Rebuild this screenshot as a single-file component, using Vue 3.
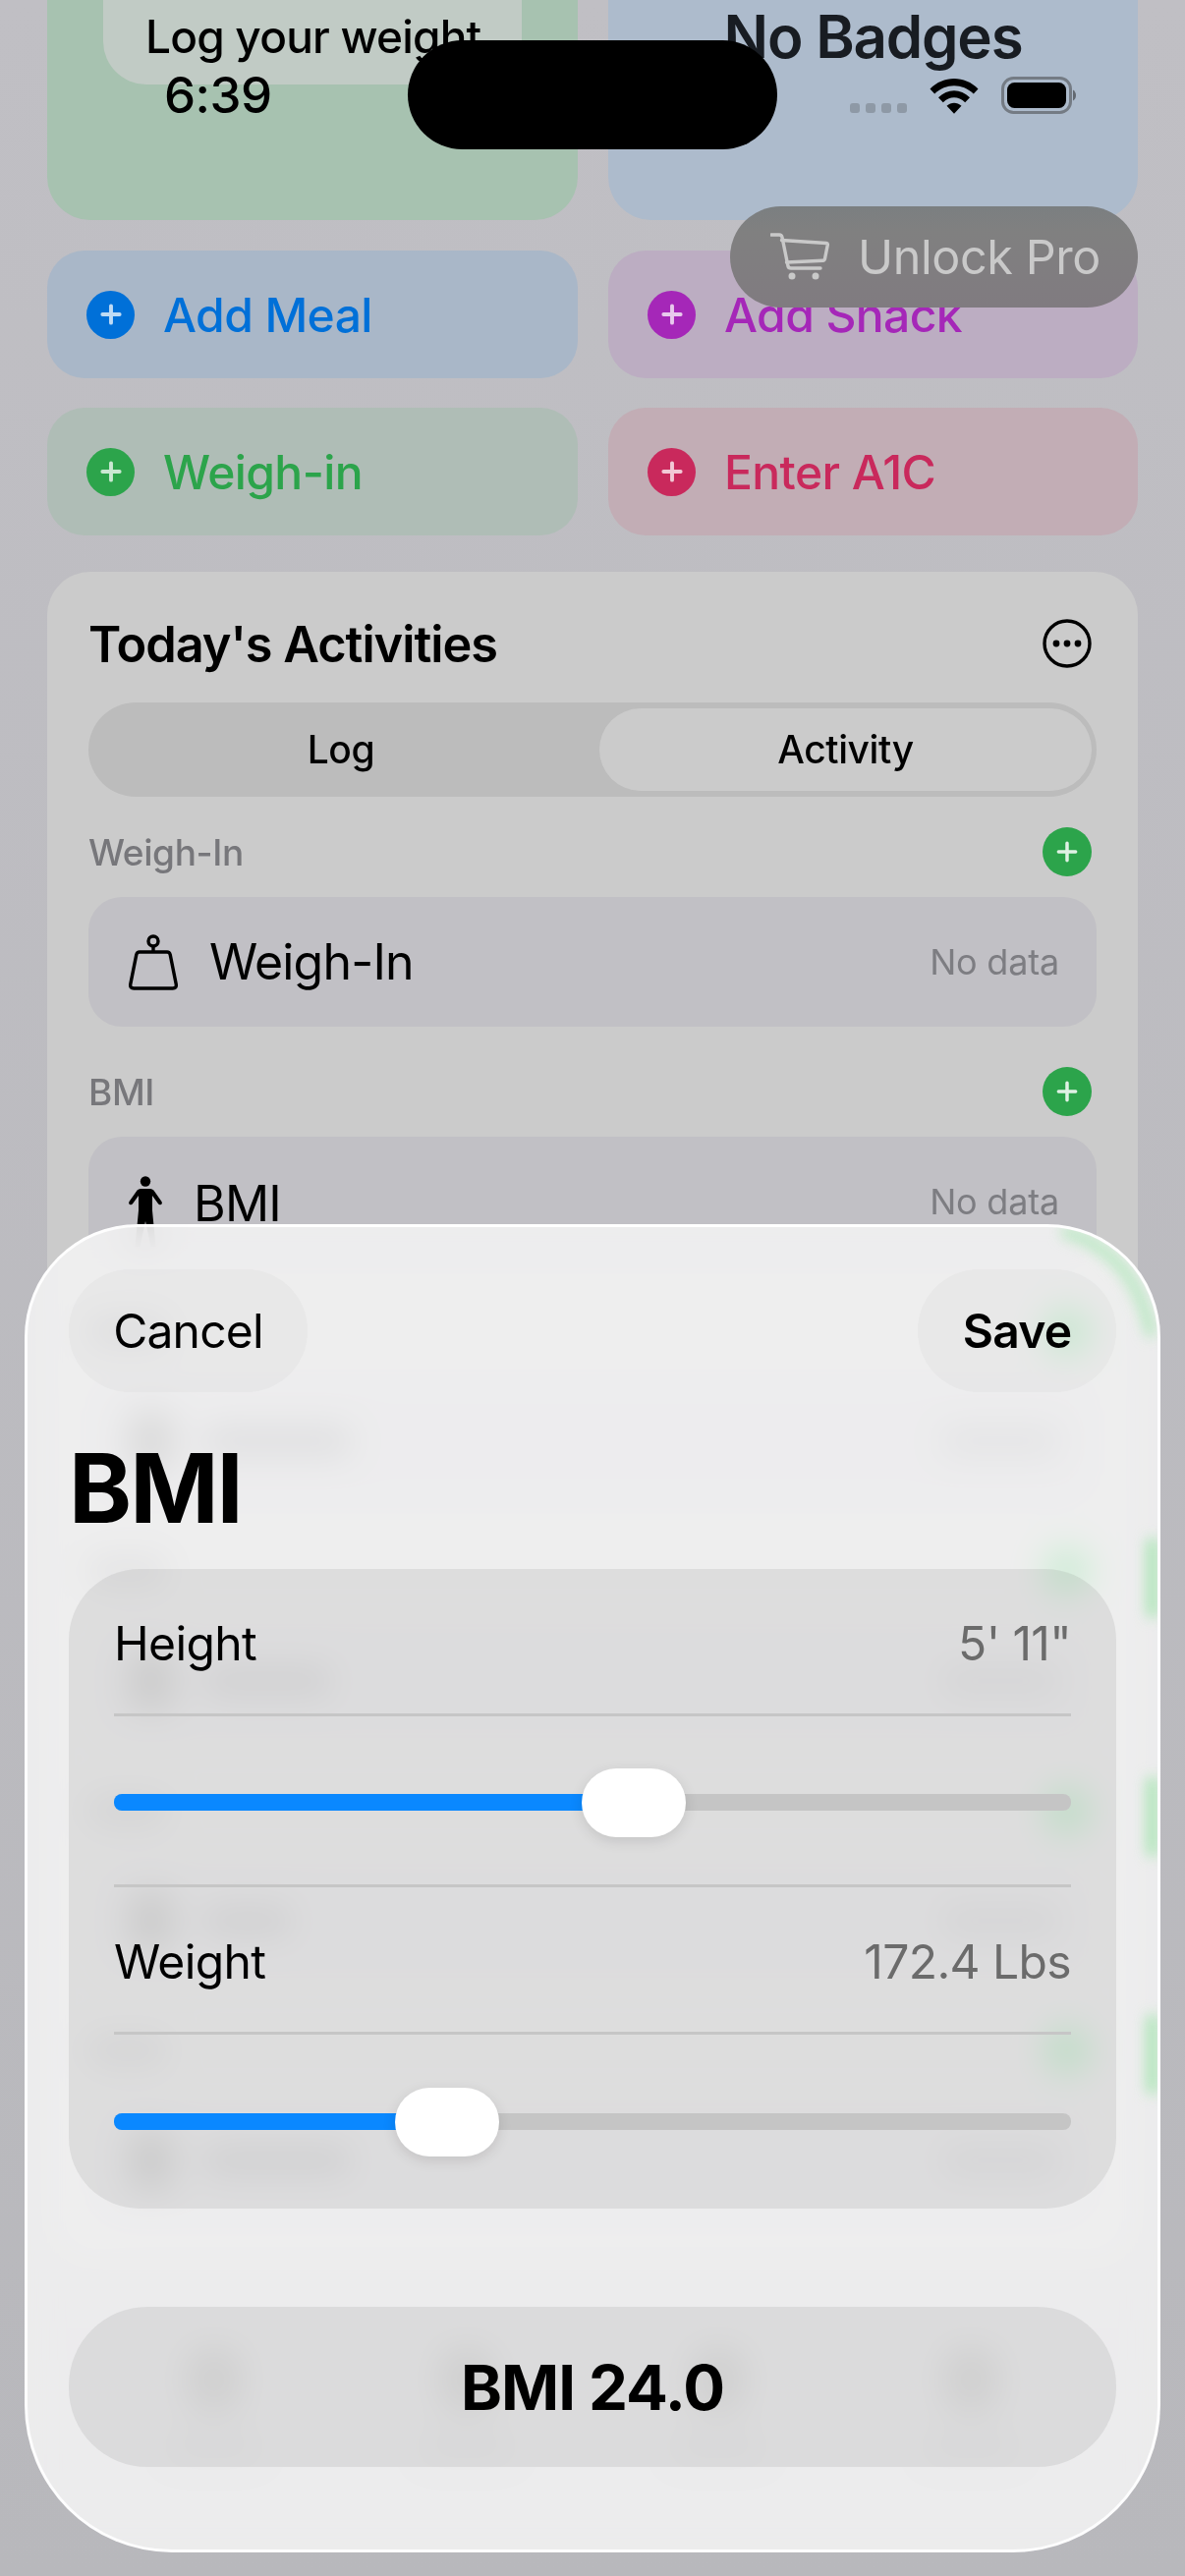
<template>
  <div class="screen">
    <div class="top-cards">
      <div class="card-green">
        <div class="log-pill">Log your weight</div>
      </div>
      <div class="card-blue">No Badges</div>
    </div>

    <div class="actions">
      <div v-for="a in actions" :key="a.label" class="action" :class="a.tone">
        <span class="plus-dot">
          <svg viewBox="0 0 24 24" width="26" height="26"><path d="M12 4v16M4 12h16" stroke="#fff" stroke-opacity=".75" stroke-width="3.6" stroke-linecap="round" /></svg>
        </span>
        <span class="action-label">{{ a.label }}</span>
      </div>
    </div>

    <div class="activities">
      <div class="title-row">
        <span class="title">Today's Activities</span>
        <svg width="50" height="50" viewBox="0 0 50 50">
          <circle cx="25" cy="25" r="23" fill="none" stroke="#000" stroke-width="3.4" />
          <circle cx="14" cy="25" r="3.4" /><circle cx="25" cy="25" r="3.4" /><circle cx="36" cy="25" r="3.4" />
        </svg>
      </div>
      <div class="segment">
        <div class="seg-item off">Log</div>
        <div class="seg-item on">Activity</div>
      </div>

      <div class="section">
        <div class="section-head">
          <span>Weigh-In</span>
          <span class="green-dot"><svg viewBox="0 0 24 24" width="26" height="26"><path d="M12 4v16M4 12h16" stroke="#fff" stroke-opacity=".85" stroke-width="3.2" stroke-linecap="round" /></svg></span>
        </div>
        <div class="entry">
          <svg class="weight-icon" width="50" height="58" viewBox="0 0 50 58" fill="none" stroke="#000" stroke-width="3.4" stroke-linejoin="round">
            <circle cx="25" cy="7" r="5" />
            <path d="M25 12v6" />
            <path d="M11 18h28q2.5 0 3.2 2.6l6 30q.8 4.4-3.4 4.4H5.200q-4.200 0-3.400-4.400l6-30Q8.500 18 11 18Z" />
          </svg>
          <span class="entry-name gap-w">Weigh-In</span>
          <span class="no-data">No data</span>
        </div>
      </div>

      <div class="section">
        <div class="section-head">
          <span>BMI</span>
          <span class="green-dot"><svg viewBox="0 0 24 24" width="26" height="26"><path d="M12 4v16M4 12h16" stroke="#fff" stroke-opacity=".85" stroke-width="3.2" stroke-linecap="round" /></svg></span>
        </div>
        <div class="entry">
          <svg class="person-icon" width="34" height="72" viewBox="0 0 34 72">
            <circle cx="17" cy="5.500" r="5.200" />
            <path d="M12 13h10q2 0 3.400 1.600L33.500 26q1 2-.6 3t-2.900-.8L24 20v15l3.500 37h-5L17 46l-5.500 26h-5L10 35V20L4 28.200q-1.300 1.800-2.900.8t-.6-3l8.100-11.400Q10 13 12 13Z" />
          </svg>
          <span class="entry-name gap-b">BMI</span>
          <span class="no-data">No data</span>
        </div>
      </div>

      <!-- rows only seen as a blur through the sheet -->
      <div v-for="g in ghosts" :key="g" class="section" aria-hidden="true">
        <div class="section-head">
          <i class="ghost-bar label-bar"></i>
          <span class="green-dot"></span>
        </div>
        <div class="entry">
          <i class="ghost-icon"></i>
          <i class="ghost-bar name-bar" :style="{ width: g + 'px' }"></i>
          <i class="ghost-bar data-bar"></i>
        </div>
      </div>
    </div>

    <div class="ghost-tabs" aria-hidden="true">
      <div v-for="t in 4" :key="t" class="ghost-tab"><i></i><b></b></div>
    </div>

    <!-- status bar -->
    <span class="clock">6:39</span>
    <div class="island"></div>
    <div class="status-icons">
      <span class="dots"><i></i><i></i><i></i><i></i></span>
      <svg width="50" height="38" viewBox="0 0 50 38">
        <path d="M0.500 12.500C14 -1.500 36 -1.500 49.500 12.500L44.800 17.500C33.500 6.500 16.500 6.500 5.200 17.500Z" />
        <path d="M9 21.200C18.500 12 31.500 12 41 21.200L36.200 26.200C29.500 19.700 20.500 19.700 13.800 26.200Z" />
        <path d="M17.500 29.800C22 25.800 28 25.800 32.500 29.800L25 37.800Z" />
      </svg>
      <svg width="76" height="38" viewBox="0 0 76 38">
        <rect x="1.500" y="1.500" width="69" height="35" rx="11" fill="none" stroke="#747b84" stroke-width="3" />
        <rect x="6" y="6" width="60" height="26" rx="7.500" />
        <path d="M73 13.500q3 2 3 5.500t-3 5.500Z" fill="#626870" />
      </svg>
    </div>

    <div class="unlock">
      <svg width="60" height="50" viewBox="0 0 60 50" fill="none" stroke="#c9c9c9" stroke-width="3.4" stroke-linecap="round" stroke-linejoin="round">
        <path d="M1 2h8q2.500 0 3 2.500L18 34q.5 2 3 2h30" />
        <path d="M11.500 7.500 57 10.500q1.500.2 1.300 1.800l-2.800 14q-.4 1.800-2 1.900L16.500 30" />
        <circle cx="22" cy="44" r="3.500" fill="#c9c9c9" stroke="none" />
        <circle cx="46" cy="44" r="3.500" fill="#c9c9c9" stroke="none" />
      </svg>
      <span>Unlock Pro</span>
    </div>

    <!-- BMI sheet -->
    <div class="sheet">
      <svg class="glass-edge" width="1156" height="1352" viewBox="0 0 1156 1352" fill="none" aria-hidden="true">
        <path d="M1060 8Q1130 30 1146 110" stroke="#a9e6b4" stroke-opacity=".8" stroke-width="11" stroke-linecap="round" />
        <path d="M1148 325v70M1148 568v70M1148 810v70" stroke="#a9e6b4" stroke-width="12" stroke-linecap="round" />
      </svg>
      <div class="sheet-head">
        <div class="head-btn cancel">Cancel</div>
        <div class="head-btn save">Save</div>
      </div>
      <h1 class="sheet-title">BMI</h1>
      <div class="panel">
        <template v-for="m in metrics" :key="m.label">
          <div class="stat">
            <span>{{ m.label }}</span>
            <span class="stat-value">{{ m.value }}</span>
          </div>
          <div class="slide">
            <div class="track">
              <div class="fill" :style="{ width: m.pct + '%' }"></div>
              <div class="thumb" :style="{ left: m.pct + '%' }"></div>
            </div>
          </div>
        </template>
      </div>
      <div class="result">BMI 24.0</div>
    </div>
  </div>
</template>

<script setup>
const actions = [
  { label: 'Add Meal', tone: 'blue' },
  { label: 'Add Snack', tone: 'purple' },
  { label: 'Weigh-in', tone: 'green' },
  { label: 'Enter A1C', tone: 'pink' }
]

// width of the blurred name in each hidden row
const ghosts = [150, 130, 90, 150]

const metrics = [
  { label: 'Height', value: `5' 11"`, pct: 54.3 },
  { label: 'Weight', value: '172.4 Lbs', pct: 34.8 }
]
</script>

<style>
html, body {
  margin: 0;
  background: #bdbdc1;
}
</style>

<style scoped>
.screen {
  position: relative;
  width: 1206px;
  height: 2622px;
  overflow: hidden;
  box-sizing: border-box;
  padding: 0 48px;
  background: linear-gradient(#c0bfc4, #b8b8bc);
  font-family: Inter, "Liberation Sans", sans-serif;
  color: #000;
}

.top-cards {
  display: grid;
  grid-template-columns: 540px 539px;
  gap: 31px;
  height: 284px;
  margin-top: -60px;
}
.card-green, .card-blue {
  border-radius: 44px;
  position: relative;
}
.card-green {
  background: #a7c2b0;
  padding-left: 57px;
}
.card-blue {
  background: #adbbcc;
  color: #181c22;
  font-size: 60px;
  font-weight: 600;
  letter-spacing: -1.2px;
  text-align: center;
  line-height: 54px;
  padding-top: 70px;
  box-sizing: border-box;
}
.log-pill {
  width: 426px;
  height: 146px;
  box-sizing: border-box;
  padding: 70px 0 0 43px;
  border-radius: 44px;
  background: #c1cbc5;
  font-size: 46px;
  line-height: 54px;
  font-weight: 500;
  letter-spacing: -0.8px;
}

.actions {
  display: grid;
  grid-template-columns: 540px 539px;
  gap: 30px 31px;
  margin-top: 31px;
}
.action {
  height: 130px;
  border-radius: 38px;
  display: flex;
  align-items: center;
  gap: 29px;
  padding-left: 40px;
}
.plus-dot {
  width: 49px;
  height: 49px;
  border-radius: 50%;
  display: flex;
  align-items: center;
  justify-content: center;
  background: currentColor;
  flex: none;
}
.action-label {
  font-size: 48px;
  font-weight: 500;
  letter-spacing: -0.6px;
}
.blue { background: #a9b7c8; color: #0070d8; }
.purple { background: #bcadc2; color: #a527b8; }
.green { background: #afbdb6; color: #2ca44b; }
.pink { background: #c2adb5; color: #c9295c; }

.activities {
  margin-top: 37px;
  background: #cbcbcb;
  border-radius: 44px;
  padding: 48px 42px 40px 42px;
}
.title-row {
  display: flex;
  justify-content: space-between;
  align-items: center;
  height: 50px;
  padding-right: 5px;
}
.title {
  font-size: 50.500px;
  font-weight: 600;
  letter-spacing: -1px;
}
.segment {
  margin-top: 35px;
  height: 96px;
  box-sizing: border-box;
  padding: 6px 5px 6px 0;
  border-radius: 48px;
  background: #bcbcbc;
  display: grid;
  grid-template-columns: 520px 501px;
  text-align: center;
  font-size: 39px;
  font-weight: 500;
  letter-spacing: -0.4px;
  line-height: 84px;
}
.seg-item.off { padding-right: 6px; }
.seg-item.on {
  background: #cbcbcb;
  border-radius: 42px;
}

.section {
  margin-top: 41px;
}
.segment + .section {
  margin-top: 31px;
}
.section-head {
  display: flex;
  justify-content: space-between;
  align-items: center;
  height: 50px;
  padding-right: 5px;
  font-size: 37px;
  font-weight: 500;
  color: #77777b;
  letter-spacing: -0.4px;
}
.green-dot {
  width: 50px;
  height: 50px;
  border-radius: 50%;
  background: #2ca44b;
  display: flex;
  align-items: center;
  justify-content: center;
}
.entry {
  margin-top: 21px;
  height: 132px;
  border-radius: 34px;
  background: #c1c0c5;
  display: flex;
  align-items: center;
  padding: 0 38px 0 41px;
}
.entry-name {
  font-size: 50px;
  letter-spacing: -0.8px;
}
.gap-w { margin-left: 32px; }
.gap-b { margin-left: 32px; padding-top: 4px; }
.weight-icon { margin-top: 2px; }
.person-icon { margin-top: 20px; }
.no-data {
  margin-left: auto;
  font-size: 36px;
  color: #7d7d82;
  letter-spacing: -0.2px;
}
.ghost-bar {
  display: block;
  height: 30px;
  border-radius: 10px;
  background: #55555a;
}
.label-bar { width: 80px; background: #77777b; }
.name-bar { margin-left: 30px; }
.data-bar { margin-left: auto; width: 120px; background: #7d7d82; }
.ghost-icon {
  width: 46px;
  height: 60px;
  border-radius: 14px;
  background: #333;
}

.ghost-tabs {
  position: absolute;
  left: 90px;
  right: 90px;
  top: 2390px;
  display: grid;
  grid-template-columns: repeat(4, 1fr);
  justify-items: center;
}
.ghost-tab { display: flex; flex-direction: column; align-items: center; gap: 26px; }
.ghost-tab i { width: 56px; height: 64px; border-radius: 18px; background: #555; }
.ghost-tab b { width: 90px; height: 20px; border-radius: 8px; background: #8a8a8e; }

.clock {
  position: absolute;
  left: 167px;
  top: 67px;
  font-size: 51px;
  line-height: 60px;
  font-weight: 500;
  letter-spacing: -0.5px;
}
.island {
  position: absolute;
  left: 415px;
  top: 41px;
  width: 376px;
  height: 111px;
  border-radius: 56px;
  background: #000;
}
.status-icons {
  position: absolute;
  left: 865px;
  top: 78px;
  display: flex;
  align-items: flex-start;
  gap: 23px;
}
.dots {
  display: flex;
  gap: 6px;
  margin-top: 27px;
}
.dots i {
  width: 10px;
  height: 10px;
  border-radius: 3px;
  background: #8e99a6;
}
.unlock {
  position: absolute;
  left: 743px;
  top: 210px;
  width: 415px;
  height: 103px;
  box-sizing: border-box;
  border-radius: 52px;
  background: linear-gradient(#7b7f81, #808080 25%, #807b80);
  display: flex;
  align-items: center;
  padding-left: 41px;
  gap: 29px;
  color: #c9c9c9;
  font-size: 48.500px;
  letter-spacing: -0.4px;
}

.sheet {
  position: absolute;
  left: 25px;
  top: 1246px;
  width: 1156px;
  height: 1352px;
  box-sizing: border-box;
  padding: 43px 42px 0;
  border: 3px solid rgba(255, 255, 255, 0.9);
  border-radius: 115px 115px 150px 150px;
  background: rgba(243, 243, 242, 0.88);
  backdrop-filter: blur(17px) saturate(2);
  overflow: hidden;
}
.glass-edge {
  position: absolute;
  left: -3px;
  top: -3px;
  filter: blur(7px);
}
.sheet-head {
  position: relative;
  display: flex;
  justify-content: space-between;
}
.head-btn {
  height: 125px;
  border-radius: 62px;
  background: rgba(120, 120, 120, 0.05);
  display: flex;
  align-items: center;
  justify-content: center;
  font-size: 48px;
  letter-spacing: -0.8px;
}
.cancel { width: 243px; }
.save { width: 202px; font-weight: 600; }
.sheet-title {
  position: relative;
  margin: 48px 0 0;
  font-size: 97px;
  line-height: 100px;
  font-weight: 700;
  letter-spacing: -2px;
}
.panel {
  position: relative;
  margin-top: 32px;
  height: 651px;
  box-sizing: border-box;
  padding: 0 46px;
  border-radius: 72px;
  background: rgba(90, 90, 95, 0.11);
  font-size: 48px;
  letter-spacing: -0.6px;
}
.stat {
  height: 150px;
  box-sizing: border-box;
  border-bottom: 3px solid #c6c6c6;
  display: flex;
  align-items: center;
  justify-content: space-between;
  padding-top: 4px;
}
.stat-value { color: #6b6b6b; }
.slide {
  height: 174px;
  box-sizing: border-box;
  padding-top: 3px;
  border-bottom: 3px solid #c6c6c6;
  display: flex;
  align-items: center;
}
.slide:last-child { border-bottom: 0; height: 177px; padding-top: 0; }
.track {
  position: relative;
  flex: 1;
  height: 17px;
  border-radius: 8px;
  background: #c5c5c5;
}
.fill {
  height: 100%;
  border-radius: 8px 0 0 8px;
  background: #0a88ff;
}
.thumb {
  position: absolute;
  top: -26px;
  width: 106px;
  height: 70px;
  margin-left: -53px;
  border-radius: 35px;
  background: #fff;
  box-shadow: 0 4px 14px rgba(0, 0, 0, 0.12);
}
.result {
  position: relative;
  margin-top: 100px;
  height: 163px;
  border-radius: 80px;
  background: rgba(90, 90, 95, 0.11);
  display: flex;
  align-items: center;
  justify-content: center;
  font-size: 63.500px;
  font-weight: 700;
  letter-spacing: -1px;
}
</style>
